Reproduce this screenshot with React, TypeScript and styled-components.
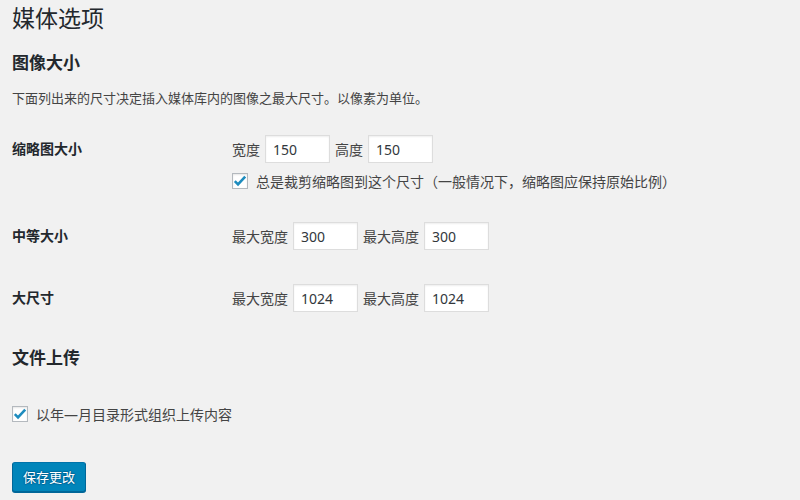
import React from "react";
import styled, { createGlobalStyle } from "styled-components";

const Global = createGlobalStyle`
  html, body { margin: 0; padding: 0; background: #f1f1f1; }
  body {
    font-family: "Segoe UI", "Noto Sans", "Noto Sans CJK SC", sans-serif;
    color: #444;
    font-size: 13px;
  }
  * { box-sizing: border-box; }
`;

const Wrap = styled.div`
  padding: 0 12px 0 12px;
  width: 800px;
  height: 500px;
  overflow: hidden;
`;

const Title = styled.h1`
  margin: 0;
  padding-top: 3px;
  font-size: 23px;
  line-height: 30px;
  font-weight: 400;
  color: #23282d;
`;

const SectionTitle = styled.h2<{ $top: number }>`
  margin: ${(p) => p.$top}px 0 0;
  font-size: 17px;
  line-height: 22px;
  font-weight: 700;
  color: #23282d;
`;

const Description = styled.p`
  margin: 14px 0 0;
  font-size: 13px;
  line-height: 20px;
  color: #444;
`;

const Table = styled.div`
  margin-top: 10px;
`;

const Row = styled.div`
  display: grid;
  grid-template-columns: 220px 1fr;
  padding: 15px 0;
`;

const RowLabel = styled.div`
  font-size: 14px;
  line-height: 32px;
  font-weight: 700;
  color: #23282d;
`;

const Line = styled.div`
  display: flex;
  align-items: center;
  height: 32px;
  font-size: 14px;
  color: #444;
`;

const FieldLabel = styled.label`
  margin-right: 5px;
  white-space: nowrap;
`;

const NumInput = styled.input`
  width: 65px;
  height: 28px;
  margin-right: 5px;
  padding: 0 7px;
  border: 1px solid #ddd;
  background: #fff;
  box-shadow: inset 0 1px 2px rgba(0, 0, 0, 0.07);
  color: #32373c;
  font-family: inherit;
  font-size: 14px;
  outline: none;
`;

const CheckLine = styled.label<{ $top: number }>`
  display: flex;
  align-items: center;
  margin-top: ${(p) => p.$top}px;
  height: 18px;
  font-size: 14px;
  color: #444;
  gap: 8px;
  white-space: nowrap;
`;

const Box = styled.span`
  width: 16px;
  height: 16px;
  flex: none;
  border: 1px solid #b4b9be;
  background: #fff;
  box-shadow: inset 0 1px 2px rgba(0, 0, 0, 0.1);
  display: flex;
  align-items: center;
  justify-content: center;
`;

const SaveButton = styled.button`
  margin-top: 39px;
  height: 30px;
  padding: 0 10px;
  border: 1px solid;
  border-color: #0073aa #006799 #006799;
  border-radius: 3px;
  background: #0085ba;
  box-shadow: 0 1px 0 #006799;
  color: #fff;
  font-family: inherit;
  font-size: 13px;
  line-height: 28px;
  text-shadow: 0 -1px 1px #006799, 1px 0 1px #006799, 0 1px 1px #006799, -1px 0 1px #006799;
  cursor: pointer;
`;

const Check = () => (
  <Box>
    <svg width="14" height="14" viewBox="0 0 14 14">
      <path d="M1.8 7.2 L5 10.4 L12.2 2.6" fill="none" stroke="#1e8cbe" strokeWidth="2.6" strokeLinecap="butt" strokeLinejoin="miter" />
    </svg>
  </Box>
);

type SizeRowProps = {
  label: string;
  wLabel: string;
  hLabel: string;
  w: string;
  h: string;
  children?: React.ReactNode;
};

const SizeRow = ({ label, wLabel, hLabel, w, h, children }: SizeRowProps) => (
  <Row>
    <RowLabel>{label}</RowLabel>
    <div>
      <Line>
        <FieldLabel>{wLabel}</FieldLabel>
        <NumInput defaultValue={w} />
        <FieldLabel>{hLabel}</FieldLabel>
        <NumInput defaultValue={h} />
      </Line>
      {children}
    </div>
  </Row>
);

export default function App() {
  return (
    <>
      <Global />
      <Wrap>
        <Title>媒体选项</Title>
        <SectionTitle $top={19}>图像大小</SectionTitle>
        <Description>下面列出来的尺寸决定插入媒体库内的图像之最大尺寸。以像素为单位。</Description>
        <Table>
          <SizeRow label="缩略图大小" wLabel="宽度" hLabel="高度" w="150" h="150">
            <CheckLine $top={7}>
              <Check />
              总是裁剪缩略图到这个尺寸（一般情况下，缩略图应保持原始比例）
            </CheckLine>
          </SizeRow>
          <SizeRow label="中等大小" wLabel="最大宽度" hLabel="最大高度" w="300" h="300" />
          <SizeRow label="大尺寸" wLabel="最大宽度" hLabel="最大高度" w="1024" h="1024" />
        </Table>
        <SectionTitle $top={18}>文件上传</SectionTitle>
        <CheckLine $top={36}>
          <Check />
          以年—月目录形式组织上传内容
        </CheckLine>
        <SaveButton>保存更改</SaveButton>
      </Wrap>
    </>
  );
}
